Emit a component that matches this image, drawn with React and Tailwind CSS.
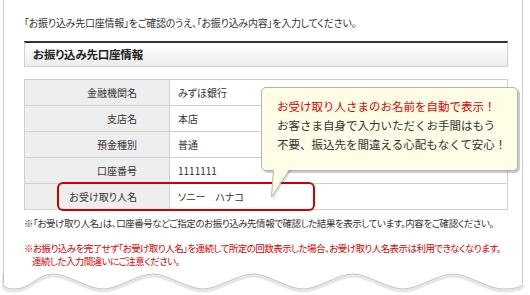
import React from 'react';

const rows = [
  ['金融機関名', 'みずほ銀行'],
  ['支店名', '本店'],
  ['預金種別', '普通'],
  ['口座番号', '1111111'],
  ['お受け取り人名', 'ソニー　ハナコ'],
];

const jp = "font-['Noto_Sans_CJK_JP',sans-serif]";

const Wave = () => (
  <svg className="block -mt-[10px]" width="530" height="22" viewBox="0 273 530 22">
    <path
      d="M3,285 C3,290 10,291 15,291 C30,291 38,276 53,276 C68,276 88,291 103,291 C118,291 138,276 153,276 C168,276 188,291 203,291 C218,291 238,276 253,276 C268,276 288,291 303,291 C318,291 338,276 353,276 C368,276 388,291 403,291 C418,291 438,276 453,276 C468,276 488,291 503,291 C512,291 523,290 523,285"
      fill="none" stroke="#e6e6e6" strokeWidth="3"
    />
    <path
      d="M3,273 L3,283 C3,288 10,289 15,289 C30,289 38,274 53,274 C68,274 88,289 103,289 C118,289 138,274 153,274 C168,274 188,289 203,289 C218,289 238,274 253,274 C268,274 288,289 303,289 C318,289 338,274 353,274 C368,274 388,289 403,289 C418,289 438,274 453,274 C468,274 488,289 503,289 C512,289 522.5,288 522.5,283 L522.5,273"
      fill="none" stroke="#c4c4c4" strokeWidth="1"
    />
  </svg>
);

export default function App() {
  return (
    <div className={`w-[530px] h-[295px] bg-white relative overflow-hidden text-[#333] ${jp} [font-feature-settings:'palt']`}>
      <div className="ml-[3px] w-[520px] h-[283px] border-x border-[#c8c8c8] pl-[20px] pt-[16px]">
        <p className="text-[10px] leading-[13px] tracking-[-0.25px] whitespace-nowrap">「お振り込み先口座情報」をご確認のうえ、「お振り込み内容」を入力してください。</p>

        <div className="mt-[12px] w-[484px] h-[26px] border-t-2 border-t-[#333] border-x border-b border-x-[#d0d0d0] border-b-[#d0d0d0] bg-gradient-to-b from-white to-[#ececec] flex items-center pl-[8px]">
          <h2 className="text-[11.5px] font-bold text-[#222] tracking-[-0.2px]">お振り込み先口座情報</h2>
        </div>

        <div className="mt-[12px] w-[484px] border-t border-x border-[#d0d0d0]">
          {rows.map(([k, v]) => (
            <div key={k} className="flex h-[26px] border-b border-[#d0d0d0] text-[10px]">
              <div className="w-[145px] bg-[#eeeeee] border-r border-[#d0d0d0] flex items-center justify-end pr-[32px]">{k}</div>
              <div className="flex-1 flex items-center pl-[8px]">{v}</div>
            </div>
          ))}
        </div>

        <p className="mt-[7px] text-[9.5px] leading-[13px] tracking-[-0.45px] whitespace-nowrap">※「お受け取り人名」は、口座番号などご指定のお振り込み先情報で確認した結果を表示しています。内容をご確認ください。</p>

        <div className="mt-[12px] text-[9.5px] leading-[13px] tracking-[-0.55px] text-[#e00000] whitespace-nowrap">
          <p>※お振り込みを完了せず「お受け取り人名」を連続して所定の回数表示した場合、お受け取り人名表示は利用できなくなります。</p>
          <p className="pl-[8px]">連続した入力間違いにご注意ください。</p>
        </div>
      </div>
      <Wave />

      {/* highlight around recipient row */}
      <div className="absolute left-[57px] top-[182px] w-[258px] h-[29px] border-2 border-[#cc0000] rounded-[6px]" />

      {/* callout */}
      <div className="absolute left-[261px] top-[87px] w-[257px] h-[84px] bg-[#fffde5] border border-[#b4b4b4] rounded-[5px] shadow-[2px_2px_1px_rgba(0,0,0,0.22)] pl-[15px] pt-[9px] [font-feature-settings:normal]">
        <p className="text-[11.5px] leading-[18px] text-[#dd0000]">お受け取り人さまのお名前を自動で表示！</p>
        <p className="mt-[1px] text-[11.5px] leading-[19px] text-[#333]">お客さま自身で入力いただくお手間はもう<br />不要、振込先を間違える心配もなくて安心！</p>
      </div>
      <svg className="absolute left-[260px] top-[169px]" width="34" height="32" viewBox="0 0 34 32">
        <path d="M13,0 L11,28 L29,0 Z" fill="#fffde5" />
        <path d="M13.5,1 L11.5,28 L29.5,1" fill="none" stroke="#b4b4b4" strokeWidth="1" />
        <path d="M30.5,1.5 L13,28.5" fill="none" stroke="rgba(0,0,0,0.15)" strokeWidth="1.5" />
      </svg>
    </div>
  );
}
